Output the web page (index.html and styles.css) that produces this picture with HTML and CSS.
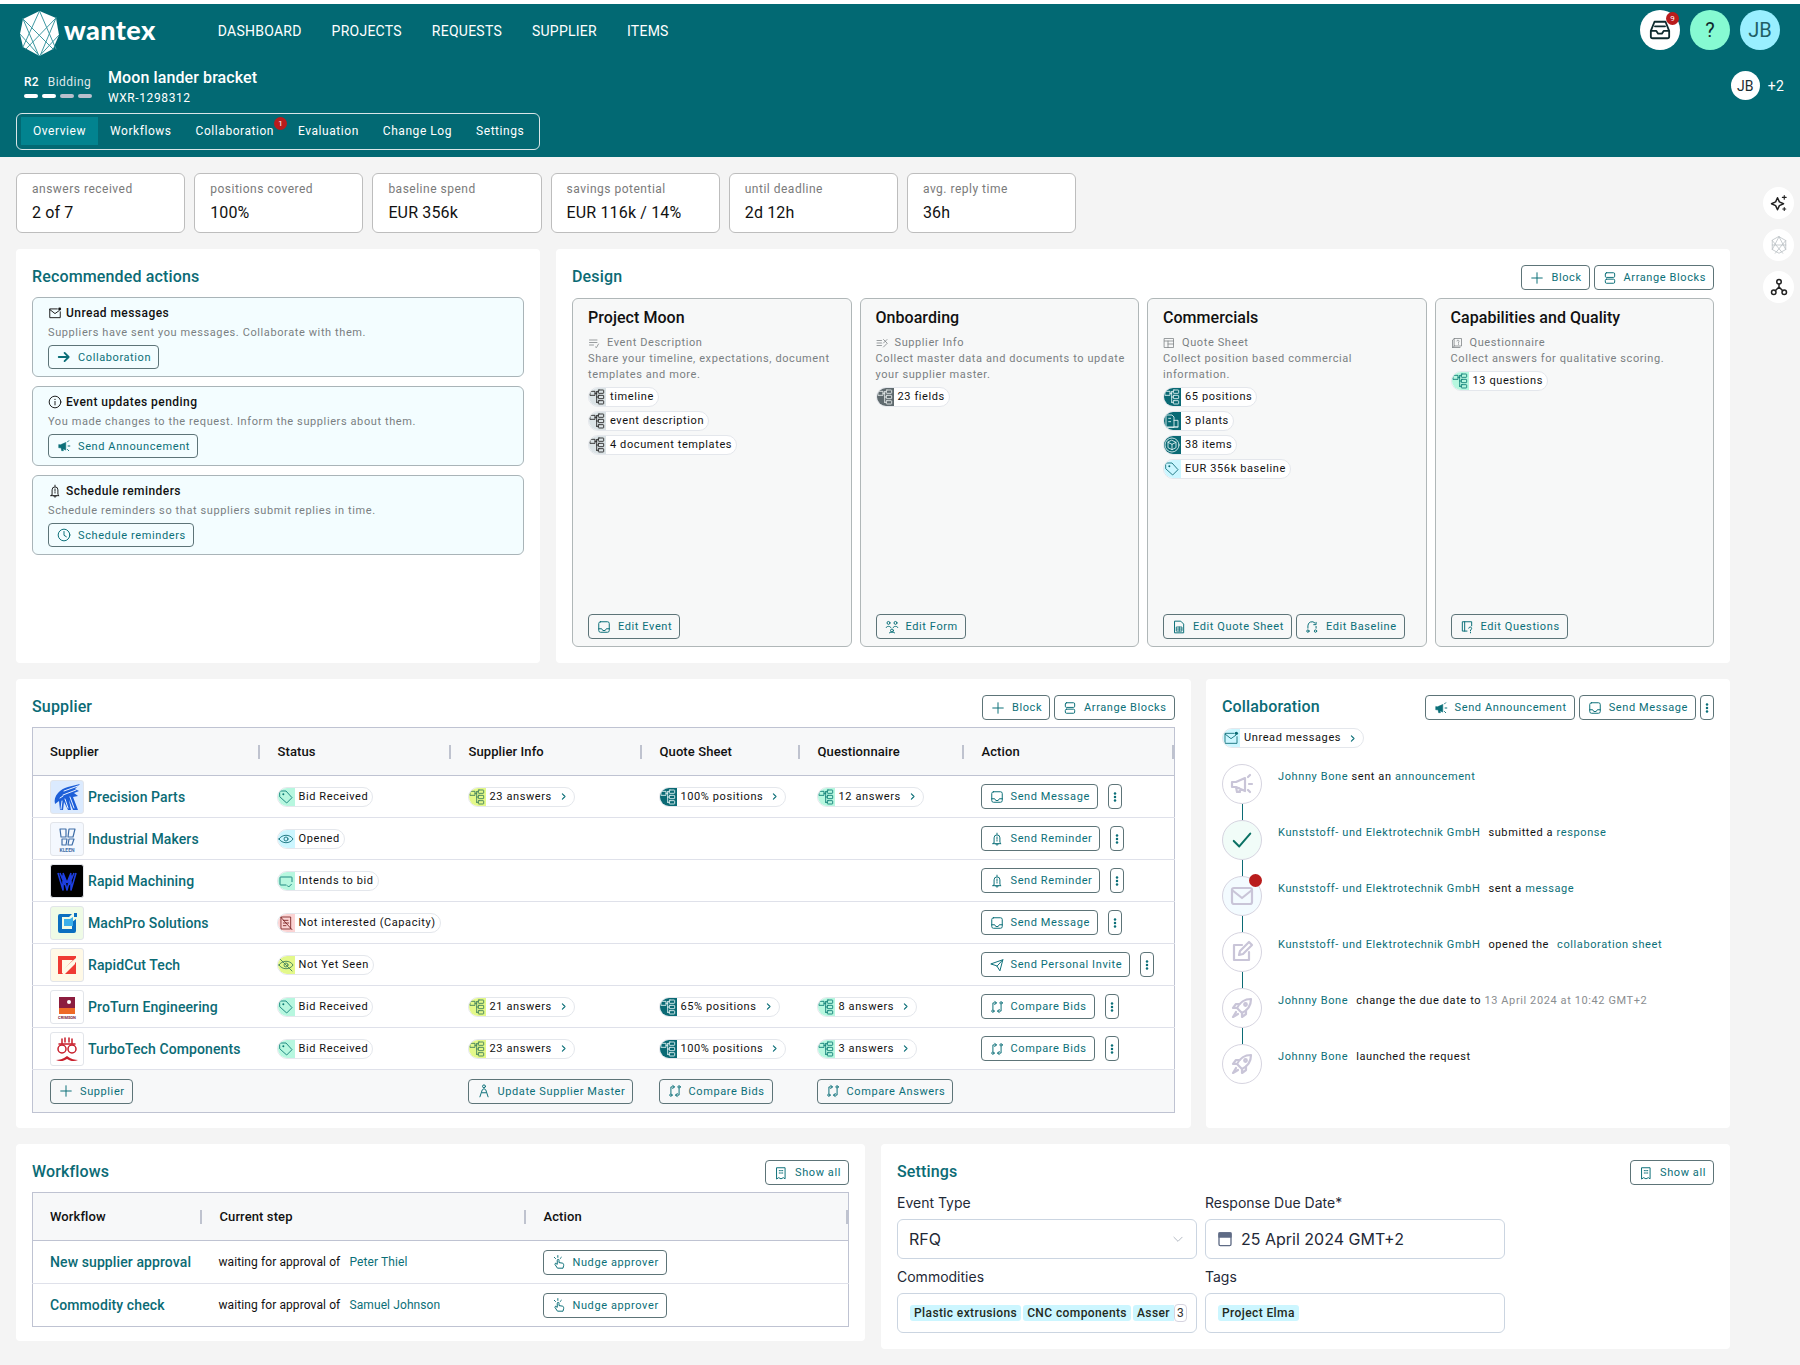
FILE: index.html
```html
<!DOCTYPE html>
<html lang="en">
<head>
<meta charset="utf-8">
<title>Moon lander bracket</title>
<link rel="stylesheet" href="styles.css">
</head>
<body>
<svg class="sprite" xmlns="http://www.w3.org/2000/svg">
<symbol id="tree" viewBox="0 0 24 24"><rect x="2" y="3.500" width="7" height="6"/><rect x="14" y="1.500" width="8" height="5" rx=".8"/><rect x="14" y="9.500" width="8" height="5" rx=".8"/><rect x="14" y="17.500" width="8" height="5" rx=".8"/><path d="M9 6.500h2.500M11.500 4V20M11.500 4H14M11.500 12H14M11.500 20H14"/></symbol>
<symbol id="maildot" viewBox="0 0 24 24"><path d="M16 5H3v15h18V10"/><path d="M3 6l9 7 7-5"/><circle cx="20" cy="5" r="2.500" fill="currentColor" stroke="none"/></symbol>
<symbol id="info" viewBox="0 0 24 24"><circle cx="12" cy="12" r="10"/><path d="M12 11v6"/><circle cx="12" cy="7.500" r="1" fill="currentColor" stroke="none"/></symbol>
<symbol id="bell" viewBox="0 0 24 24"><path d="M12 2v2M7 18V10a5 5 0 0 1 10 0v8l2 2H5zM10 20.500a2 2 0 0 0 4 0"/><path d="M12 8.500v4M12 14.500v1"/></symbol>
<symbol id="arrow" viewBox="0 0 24 24"><path d="M3 12h17M13 5l7 7-7 7" stroke-width="3.200"/></symbol>
<symbol id="mega" viewBox="0 0 24 24"><path d="M3 10v5h3l9 4V6L6 10zM7 15l1 5h3l-1-4" fill="currentColor" stroke-width="1"/><path d="M18 5l2-2M19 12h3M18 18l2 2"/></symbol>
<symbol id="megaline" viewBox="0 0 24 24"><path d="M2 10v5h4l9 4V6L6 10zM6 15l1 5h3l-1-4"/><path d="M18 5l2-2M19 12h3M18 18l2 2"/></symbol>
<symbol id="clock" viewBox="0 0 24 24"><circle cx="12" cy="12" r="10"/><path d="M12 6v6.500l4 2.500"/></symbol>
<symbol id="plus" viewBox="0 0 24 24"><path d="M12 3v18M3 12h18"/></symbol>
<symbol id="rows" viewBox="0 0 24 24"><rect x="4" y="3" width="16" height="8" rx="2"/><rect x="4" y="14" width="16" height="7" rx="2"/></symbol>
<symbol id="tray" viewBox="0 0 24 24"><rect x="3" y="3" width="18" height="18" rx="3"/><path d="M3 15h5l2 3h4l2-3h5"/></symbol>
<symbol id="people" viewBox="0 0 24 24"><circle cx="6" cy="5" r="2.500"/><circle cx="18" cy="5" r="2.500"/><circle cx="12" cy="18" r="2.500"/><path d="M2 13c0-3 8-3 8 0M14 13c0-3 8-3 8 0M7 22c0-2 10-2 10 0"/></symbol>
<symbol id="docgrid" viewBox="0 0 24 24"><path d="M5 2h10l5 5v15H5z"/><path d="M8 12h9v7H8zM12.500 12v7M8 15.500h9" stroke-width="1.500"/></symbol>
<symbol id="headset" viewBox="0 0 24 24"><path d="M5 14V10a7 7 0 0 1 12-5M19 4v4h-4"/><circle cx="5" cy="19" r="2"/><circle cx="18" cy="19" r="2"/><path d="M19 11v3"/></symbol>
<symbol id="docq" viewBox="0 0 24 24"><path d="M20 10V3H4v16h8"/><path d="M8 3v16"/><path d="M15 14a2.500 2.500 0 1 1 3 3v1.500M18 21v1"/></symbol>
<symbol id="listcheck" viewBox="0 0 24 24"><path d="M3 6h15M3 11h15M3 16h8M15 20l2 1 4-7"/></symbol>
<symbol id="listx" viewBox="0 0 24 24"><path d="M2 7h9M2 12h9M2 17h9M15 5l7 7M22 5l-7 7M15 20l7-7"/></symbol>
<symbol id="table" viewBox="0 0 24 24"><rect x="3" y="3" width="18" height="18"/><path d="M3 8h18M10 8v13M10 14h11"/></symbol>
<symbol id="bookq" viewBox="0 0 24 24"><path d="M7 3h14v15H7zM7 3L3 6v15h15M7 18l-4 3"/><path d="M12 8a2 2 0 1 1 3 2v2M15 14v1" stroke-width="1.300"/></symbol>
<symbol id="build" viewBox="0 0 24 24"><path d="M3 21V3h9l3 3v15zM15 11h6v10h-6M3 21h18"/><path d="M7 8h3M7 13h3"/></symbol>
<symbol id="cube" viewBox="0 0 24 24"><circle cx="12" cy="12" r="10.500"/><path d="M12 5l6 3v8l-6 3-6-3V8zM6 8l6 3 6-3M12 11v8"/></symbol>
<symbol id="tag" viewBox="0 0 24 24"><path d="M3 3h9l9 10-8 8L3 12z"/><circle cx="8" cy="8" r="1.500" fill="currentColor" stroke="none"/></symbol>
<symbol id="eye" viewBox="0 0 24 24"><path d="M1.500 12C6 4.500 18 4.500 22.500 12 18 19.500 6 19.500 1.500 12z"/><circle cx="12" cy="12" r="3"/></symbol>
<symbol id="chatcheck" viewBox="0 0 24 24"><path d="M12 18H4a1 1 0 0 1-1-1V7a1 1 0 0 1 1-1h16a1 1 0 0 1 1 1v6"/><path d="M14 19l2 2 4-4"/></symbol>
<symbol id="nodoc" viewBox="0 0 24 24"><path d="M5 3h14v18H5z"/><path d="M8 8h7M8 12h8M8 16h4M3 2l18 20"/></symbol>
<symbol id="eyeoff" viewBox="0 0 24 24"><path d="M1.500 12C6 4.500 18 4.500 22.500 12 18 19.500 6 19.500 1.500 12z"/><circle cx="12" cy="12" r="3"/><path d="M3 3l18 18"/></symbol>
<symbol id="send" viewBox="0 0 24 24"><path d="M2 10L22 3l-5 19-5-8zM12 14l10-11"/></symbol>
<symbol id="compare" viewBox="0 0 24 24"><path d="M8 2l3 3-3 3M11 5H5v11M16 22l-3-3 3-3M13 19h6V8"/><circle cx="5" cy="19" r="2"/><circle cx="19" cy="5" r="2"/></symbol>
<symbol id="person" viewBox="0 0 24 24"><circle cx="12" cy="4" r="2.500"/><path d="M5 22l4-12 3-2 3 2 4 12M9 15h6"/></symbol>
<symbol id="chev" viewBox="0 0 24 24"><path d="M9 5l7 7-7 7" stroke-width="3"/></symbol>
<symbol id="rocket" viewBox="0 0 24 24"><path d="M21 3c-7 0-11 3-14 9l5 5c6-3 9-7 9-14zM7 12H3l3-4h4M12 17v4l4-3v-4M6 16l-3 5 5-3"/><circle cx="15.500" cy="8.500" r="1.300"/></symbol>
<symbol id="edit" viewBox="0 0 24 24"><path d="M12 5H4v15h15v-8"/><path d="M9 15l1-4L19 2l3 3-9 9z"/></symbol>
<symbol id="check" viewBox="0 0 24 24"><path d="M3 13l6 6L21 5"/></symbol>
<symbol id="mail" viewBox="0 0 24 24"><rect x="2" y="4" width="20" height="16" rx="2"/><path d="M2 6l10 8 10-8"/></symbol>
<symbol id="hand" viewBox="0 0 24 24"><path d="M9 22l-4-6 1-2 3 2V9a1.500 1.500 0 0 1 3 0v4l6 1c2 .5 2 2 2 4l-1 4z"/><path d="M4 4l2 2M10 1v3M16 4l-2 2"/></symbol>
<symbol id="receipt" viewBox="0 0 24 24"><path d="M5 3h14v19l-3-2-4 2-4-2-3 2z"/><path d="M9 8h2M13 8h2M9 12h2M13 12h2"/></symbol>
<symbol id="calendar" viewBox="0 0 24 24"><rect x="3" y="3" width="18" height="19" rx="2"/><rect x="3" y="3" width="18" height="6" fill="currentColor"/></symbol>
<symbol id="down" viewBox="0 0 24 24"><path d="M5 9l7 7 7-7"/></symbol>
<symbol id="sparkle" viewBox="0 0 24 24"><path d="M10 5l2.500 5.500L18 13l-5.500 2.500L10 21l-2.500-5.500L2 13l5.500-2.500z"/><path d="M19 2v5M16.500 4.500h5M19 18v4M17 20h4" stroke-width="1.500"/></symbol>
<symbol id="hexa" viewBox="0 0 24 24"><path d="M12 1l9 5v12l-9 5-9-5V6zM3 6l14 17M21 6L7 23M12 1L3 18M12 1l9 17M3 12h18"/></symbol>
<symbol id="nodes" viewBox="0 0 24 24"><circle cx="12" cy="5" r="3"/><circle cx="5" cy="19" r="3"/><circle cx="19" cy="19" r="3"/><path d="M12 8v4M12 12l-5 5M12 12l5 5"/></symbol>
<symbol id="inbox" viewBox="0 0 24 24"><path d="M6 3h12l4 10v6a2 2 0 0 1-2 2H4a2 2 0 0 1-2-2v-6zM2 13h6l2 3h4l2-3h6M6.500 8h11"/></symbol>
<symbol id="dots" viewBox="0 0 24 24"><circle cx="12" cy="5" r="2.500" fill="currentColor" stroke="none"/><circle cx="12" cy="12" r="2.500" fill="currentColor" stroke="none"/><circle cx="12" cy="19" r="2.500" fill="currentColor" stroke="none"/></symbol>
</svg>

<div class="topstrip"></div>
<header class="header">
  <div class="topbar">
    <a class="logo">
      <svg class="logo-mark" viewBox="0 0 39 45"><path class="logo-hex" d="M19.500 0L36 7l3 17-6 14-13.500 7L3 36 0 23 3 8z"/><path class="logo-web" d="M19.500 0L36 38M19.500 0L3 36M3 8l30 30M36 7L6 38M0 23l19.500 22M39 24L19.500 45M3 8l16 37M36 7L20 45"/></svg>
      <span class="logo-text">wantex</span>
    </a>
    <nav class="nav"><a>DASHBOARD</a><a>PROJECTS</a><a>REQUESTS</a><a>SUPPLIER</a><a>ITEMS</a></nav>
    <div class="top-actions">
      <span class="round round-white"><svg class="ic-22"><use href="#inbox"/></svg><span class="badge">9</span></span>
      <span class="round round-mint">?</span>
      <span class="round round-cyan">JB</span>
    </div>
  </div>
  <div class="titlebar">
    <div class="phase">
      <div class="phase-text"><b>R2</b><span>Bidding</span></div>
      <div class="phase-steps"><i class="on"></i><i class="on"></i><i></i><i></i></div>
    </div>
    <div class="title-text">
      <div class="title">Moon lander bracket</div>
      <div class="code">WXR-1298312</div>
    </div>
    <div class="team"><span class="mini-avatar">JB</span><span>+2</span></div>
  </div>
  <nav class="tabs">
    <a class="tab active">Overview</a><a class="tab">Workflows</a><a class="tab">Collaboration<span class="badge tab-badge">1</span></a><a class="tab">Evaluation</a><a class="tab">Change Log</a><a class="tab">Settings</a>
  </nav>
</header>

<aside class="rail">
  <span class="rail-btn"><svg class="ic-18 dark"><use href="#sparkle"/></svg></span>
  <span class="rail-btn"><svg class="ic-18 pale"><use href="#hexa"/></svg></span>
  <span class="rail-btn"><svg class="ic-18 dark"><use href="#nodes"/></svg></span>
</aside>

<main class="main">
  <section class="stats">
    <div class="stat"><div class="stat-label">answers received</div><div class="stat-value">2 of 7</div></div>
    <div class="stat"><div class="stat-label">positions covered</div><div class="stat-value">100%</div></div>
    <div class="stat"><div class="stat-label">baseline spend</div><div class="stat-value">EUR 356k</div></div>
    <div class="stat"><div class="stat-label">savings potential</div><div class="stat-value">EUR 116k / 14%</div></div>
    <div class="stat"><div class="stat-label">until deadline</div><div class="stat-value">2d 12h</div></div>
    <div class="stat"><div class="stat-label">avg. reply time</div><div class="stat-value">36h</div></div>
  </section>

  <div class="row row-one">
    <section class="panel">
      <div class="panel-head"><h2>Recommended actions</h2></div>
      <div class="recs">
        <div class="rec">
          <div class="rec-title"><svg class="ic-14"><use href="#maildot"/></svg>Unread messages</div>
          <p class="muted">Suppliers have sent you messages. Collaborate with them.</p>
          <a class="btn"><svg class="ic-14"><use href="#arrow"/></svg>Collaboration</a>
        </div>
        <div class="rec">
          <div class="rec-title"><svg class="ic-14"><use href="#info"/></svg>Event updates pending</div>
          <p class="muted">You made changes to the request. Inform the suppliers about them.</p>
          <a class="btn"><svg class="ic-14"><use href="#mega"/></svg>Send Announcement</a>
        </div>
        <div class="rec">
          <div class="rec-title"><svg class="ic-14"><use href="#bell"/></svg>Schedule reminders</div>
          <p class="muted">Schedule reminders so that suppliers submit replies in time.</p>
          <a class="btn"><svg class="ic-14"><use href="#clock"/></svg>Schedule reminders</a>
        </div>
      </div>
    </section>

    <section class="panel">
      <div class="panel-head"><h2>Design</h2><div class="btns">
        <a class="btn"><svg class="ic-14"><use href="#plus"/></svg>Block</a>
        <a class="btn"><svg class="ic-14"><use href="#rows"/></svg>Arrange Blocks</a>
      </div></div>
      <div class="design-grid">
        <article class="block">
          <h3>Project Moon</h3>
          <div class="block-kind"><svg class="ic-12"><use href="#listcheck"/></svg>Event Description</div>
          <p class="muted">Share your timeline, expectations, document templates and more.</p>
          <div class="chips">
            <span class="chip"><span class="chip-ic c-slate"><svg class="ic-16"><use href="#tree"/></svg></span>timeline</span>
            <span class="chip"><span class="chip-ic c-slate"><svg class="ic-16"><use href="#tree"/></svg></span>event description</span>
            <span class="chip"><span class="chip-ic c-slate"><svg class="ic-16"><use href="#tree"/></svg></span>4 document templates</span>
          </div>
          <div class="block-foot"><a class="btn"><svg class="ic-14"><use href="#tray"/></svg>Edit Event</a></div>
        </article>
        <article class="block">
          <h3>Onboarding</h3>
          <div class="block-kind"><svg class="ic-12"><use href="#listx"/></svg>Supplier Info</div>
          <p class="muted">Collect master data and documents to update your supplier master.</p>
          <div class="chips">
            <span class="chip"><span class="chip-ic c-grey"><svg class="ic-16"><use href="#tree"/></svg></span>23 fields</span>
          </div>
          <div class="block-foot"><a class="btn"><svg class="ic-14"><use href="#people"/></svg>Edit Form</a></div>
        </article>
        <article class="block">
          <h3>Commercials</h3>
          <div class="block-kind"><svg class="ic-12"><use href="#table"/></svg>Quote Sheet</div>
          <p class="muted">Collect position based commercial information.</p>
          <div class="chips">
            <span class="chip"><span class="chip-ic c-teal"><svg class="ic-16"><use href="#tree"/></svg></span>65 positions</span>
            <span class="chip"><span class="chip-ic c-teal"><svg class="ic-16"><use href="#build"/></svg></span>3 plants</span>
            <span class="chip"><span class="chip-ic c-teal"><svg class="ic-16"><use href="#cube"/></svg></span>38 items</span>
            <span class="chip"><span class="chip-ic c-cyan"><svg class="ic-16"><use href="#tag"/></svg></span>EUR 356k baseline</span>
          </div>
          <div class="block-foot"><a class="btn"><svg class="ic-14"><use href="#docgrid"/></svg>Edit Quote Sheet</a><a class="btn"><svg class="ic-14"><use href="#headset"/></svg>Edit Baseline</a></div>
        </article>
        <article class="block">
          <h3>Capabilities and Quality</h3>
          <div class="block-kind"><svg class="ic-12"><use href="#bookq"/></svg>Questionnaire</div>
          <p class="muted">Collect answers for qualitative scoring.</p>
          <div class="chips">
            <span class="chip"><span class="chip-ic c-mint"><svg class="ic-16"><use href="#tree"/></svg></span>13 questions</span>
          </div>
          <div class="block-foot"><a class="btn"><svg class="ic-14"><use href="#docq"/></svg>Edit Questions</a></div>
        </article>
      </div>
    </section>
  </div>

  <div class="row row-two">
    <section class="panel">
      <div class="panel-head"><h2>Supplier</h2><div class="btns">
        <a class="btn"><svg class="ic-14"><use href="#plus"/></svg>Block</a>
        <a class="btn"><svg class="ic-14"><use href="#rows"/></svg>Arrange Blocks</a>
      </div></div>
      <table class="grid supplier-grid">
        <colgroup><col class="s1"><col class="s2"><col class="s2"><col class="s3"><col class="s4"><col></colgroup>
        <thead><tr><th>Supplier</th><th>Status</th><th>Supplier Info</th><th>Quote Sheet</th><th>Questionnaire</th><th>Action</th></tr></thead>
        <tbody>
          <tr>
            <td><div class="who"><span class="logo-box lb-blue"><svg viewBox="0 0 32 32"><path class="f-blue" d="M29 3C21 5 12 6 7 12 4 15 3 19 4 23l4-3 1 9h3l1-8 4 8h3l-2-10 4 10h5l-5-13 5-1-4-3 5-2-4-2z"/><path class="s-white" d="M27 5L13 10M25 9L12 14M9 17l3-2M14 18l3 9M19 16l4 11M11 20l-1 8"/></svg></span><a class="name">Precision Parts</a></div></td>
            <td><span class="chip"><span class="chip-ic c-mint"><svg class="ic-16"><use href="#tag"/></svg></span>Bid Received</span></td>
            <td><span class="chip"><span class="chip-ic c-lime"><svg class="ic-16"><use href="#tree"/></svg></span>23 answers<svg class="ic-chev"><use href="#chev"/></svg></span></td>
            <td><span class="chip"><span class="chip-ic c-teal"><svg class="ic-16"><use href="#tree"/></svg></span>100% positions<svg class="ic-chev"><use href="#chev"/></svg></span></td>
            <td><span class="chip"><span class="chip-ic c-mint"><svg class="ic-16"><use href="#tree"/></svg></span>12 answers<svg class="ic-chev"><use href="#chev"/></svg></span></td>
            <td><div class="acts"><a class="btn"><svg class="ic-14"><use href="#tray"/></svg>Send Message</a><a class="btn-more"><svg class="ic-12"><use href="#dots"/></svg></a></div></td>
          </tr>
          <tr>
            <td><div class="who"><span class="logo-box lb-ice"><svg viewBox="0 0 32 32"><path class="s-navy" d="M9 6h6v8h-5zM18 6h6l-2 8h-5zM11 16h5l-1 6h-4zM18 16h5l-2 6h-4z"/><text class="lb-word" x="16" y="29">KLEEN</text></svg></span><a class="name">Industrial Makers</a></div></td>
            <td><span class="chip"><span class="chip-ic c-cyan"><svg class="ic-16"><use href="#eye"/></svg></span>Opened</span></td>
            <td></td><td></td><td></td>
            <td><div class="acts"><a class="btn"><svg class="ic-14"><use href="#bell"/></svg>Send Reminder</a><a class="btn-more"><svg class="ic-12"><use href="#dots"/></svg></a></div></td>
          </tr>
          <tr>
            <td><div class="who"><span class="logo-box lb-black"><svg viewBox="0 0 32 32"><path class="s-royal" d="M7 8l5 17V10l4 15 4-15v15l5-17M9 8l5 12M12 8l4 10M20 8l-4 10M23 8l-5 12"/></svg></span><a class="name">Rapid Machining</a></div></td>
            <td><span class="chip"><span class="chip-ic c-mint"><svg class="ic-16"><use href="#chatcheck"/></svg></span>Intends to bid</span></td>
            <td></td><td></td><td></td>
            <td><div class="acts"><a class="btn"><svg class="ic-14"><use href="#bell"/></svg>Send Reminder</a><a class="btn-more"><svg class="ic-12"><use href="#dots"/></svg></a></div></td>
          </tr>
          <tr>
            <td><div class="who"><span class="logo-box lb-green"><svg viewBox="0 0 32 32"><path class="f-azure" d="M9 7h12l-3 3h-7v12h10v-7l4-3v12a2 2 0 0 1-2 2H9a2 2 0 0 1-2-2V9a2 2 0 0 1 2-2z"/><path class="f-sky" d="M13 12h6l3-2v9H13z"/><path class="f-azure" d="M23 6h3v4h-3z"/></svg></span><a class="name">MachPro Solutions</a></div></td>
            <td><span class="chip"><span class="chip-ic c-red"><svg class="ic-16"><use href="#nodoc"/></svg></span>Not interested (Capacity)</span></td>
            <td></td><td></td><td></td>
            <td><div class="acts"><a class="btn"><svg class="ic-14"><use href="#tray"/></svg>Send Message</a><a class="btn-more"><svg class="ic-12"><use href="#dots"/></svg></a></div></td>
          </tr>
          <tr>
            <td><div class="who"><span class="logo-box lb-cream"><svg viewBox="0 0 32 32"><path class="f-red" d="M7 7h18v2L11 21v-10h0 0v13h3l11-11v12H7z"/><path class="f-cream" d="M11 11h11L11 22z"/><path class="f-cream" d="M24 13v2L13 26h-3z"/></svg></span><a class="name">RapidCut Tech</a></div></td>
            <td><span class="chip"><span class="chip-ic c-lime"><svg class="ic-16"><use href="#eyeoff"/></svg></span>Not Yet Seen</span></td>
            <td></td><td></td><td></td>
            <td><div class="acts"><a class="btn"><svg class="ic-14"><use href="#send"/></svg>Send Personal Invite</a><a class="btn-more"><svg class="ic-12"><use href="#dots"/></svg></a></div></td>
          </tr>
          <tr>
            <td><div class="who"><span class="logo-box"><svg viewBox="0 0 32 32"><rect class="f-maroon" x="8" y="6" width="16" height="11"/><rect class="f-orange" x="8" y="17" width="16" height="6"/><circle class="f-white" cx="18" cy="11" r="2"/><text class="lb-word lb-crimson" x="16" y="28">CRIMSON</text></svg></span><a class="name">ProTurn Engineering</a></div></td>
            <td><span class="chip"><span class="chip-ic c-mint"><svg class="ic-16"><use href="#tag"/></svg></span>Bid Received</span></td>
            <td><span class="chip"><span class="chip-ic c-lime"><svg class="ic-16"><use href="#tree"/></svg></span>21 answers<svg class="ic-chev"><use href="#chev"/></svg></span></td>
            <td><span class="chip"><span class="chip-ic c-teal"><svg class="ic-16"><use href="#tree"/></svg></span>65% positions<svg class="ic-chev"><use href="#chev"/></svg></span></td>
            <td><span class="chip"><span class="chip-ic c-mint"><svg class="ic-16"><use href="#tree"/></svg></span>8 answers<svg class="ic-chev"><use href="#chev"/></svg></span></td>
            <td><div class="acts"><a class="btn"><svg class="ic-14"><use href="#compare"/></svg>Compare Bids</a><a class="btn-more"><svg class="ic-12"><use href="#dots"/></svg></a></div></td>
          </tr>
          <tr>
            <td><div class="who"><span class="logo-box"><svg viewBox="0 0 32 32"><circle class="s-crim" cx="11" cy="16" r="4"/><circle class="s-crim" cx="21" cy="16" r="4"/><path class="s-crim" d="M11 6v4M14 5v4M18 5v4M21 6v4M8 11h16"/><path class="f-crim" d="M5 27c3 0 7-1 11-4 4 3 8 4 11 4-4 2-8 1-11-1-3 2-7 3-11 1z"/></svg></span><a class="name">TurboTech Components</a></div></td>
            <td><span class="chip"><span class="chip-ic c-mint"><svg class="ic-16"><use href="#tag"/></svg></span>Bid Received</span></td>
            <td><span class="chip"><span class="chip-ic c-lime"><svg class="ic-16"><use href="#tree"/></svg></span>23 answers<svg class="ic-chev"><use href="#chev"/></svg></span></td>
            <td><span class="chip"><span class="chip-ic c-teal"><svg class="ic-16"><use href="#tree"/></svg></span>100% positions<svg class="ic-chev"><use href="#chev"/></svg></span></td>
            <td><span class="chip"><span class="chip-ic c-mint"><svg class="ic-16"><use href="#tree"/></svg></span>3 answers<svg class="ic-chev"><use href="#chev"/></svg></span></td>
            <td><div class="acts"><a class="btn"><svg class="ic-14"><use href="#compare"/></svg>Compare Bids</a><a class="btn-more"><svg class="ic-12"><use href="#dots"/></svg></a></div></td>
          </tr>
        </tbody>
        <tfoot><tr>
          <td><a class="btn"><svg class="ic-14"><use href="#plus"/></svg>Supplier</a></td>
          <td></td>
          <td><a class="btn"><svg class="ic-14"><use href="#person"/></svg>Update Supplier Master</a></td>
          <td><a class="btn"><svg class="ic-14"><use href="#compare"/></svg>Compare Bids</a></td>
          <td colspan="2"><a class="btn"><svg class="ic-14"><use href="#compare"/></svg>Compare Answers</a></td>
        </tr></tfoot>
      </table>
    </section>

    <section class="panel">
      <div class="panel-head"><h2>Collaboration</h2><div class="btns">
        <a class="btn"><svg class="ic-14"><use href="#mega"/></svg>Send Announcement</a>
        <a class="btn"><svg class="ic-14"><use href="#tray"/></svg>Send Message</a>
        <a class="btn-more"><svg class="ic-12"><use href="#dots"/></svg></a>
      </div></div>
      <span class="chip unread"><span class="chip-ic c-cyan"><svg class="ic-16"><use href="#maildot"/></svg></span>Unread messages<svg class="ic-chev"><use href="#chev"/></svg></span>
      <ol class="feed">
        <li><span class="dot"><svg class="ic-24"><use href="#megaline"/></svg></span><p><a>Johnny Bone</a> sent an <a>announcement</a></p></li>
        <li><span class="dot dot-ok"><svg class="ic-22"><use href="#check"/></svg></span><p><a>Kunststoff- und Elektrotechnik GmbH</a><span class="sp">submitted a</span> <a>response</a></p></li>
        <li><span class="dot dot-new"><svg class="ic-24"><use href="#mail"/></svg><span class="dot-badge"></span></span><p><a>Kunststoff- und Elektrotechnik GmbH</a><span class="sp">sent a</span> <a>message</a></p></li>
        <li><span class="dot"><svg class="ic-24"><use href="#edit"/></svg></span><p><a>Kunststoff- und Elektrotechnik GmbH</a><span class="sp">opened the</span><a class="sp">collaboration sheet</a></p></li>
        <li><span class="dot"><svg class="ic-24"><use href="#rocket"/></svg></span><p><a>Johnny Bone</a><span class="sp">change the due date to</span> <span class="when">13 April 2024 at 10:42 GMT+2</span></p></li>
        <li><span class="dot"><svg class="ic-24"><use href="#rocket"/></svg></span><p><a>Johnny Bone</a><span class="sp">launched the request</span></p></li>
      </ol>
    </section>
  </div>

  <div class="row row-three">
    <section class="panel panel-wf">
      <div class="panel-head"><h2>Workflows</h2><div class="btns"><a class="btn"><svg class="ic-14"><use href="#receipt"/></svg>Show all</a></div></div>
      <table class="grid wf-grid">
        <colgroup><col class="w1"><col class="w2"><col></colgroup>
        <thead><tr><th>Workflow</th><th>Current step</th><th>Action</th></tr></thead>
        <tbody>
          <tr><td><a class="name">New supplier approval</a></td><td class="step">waiting for approval of <a>Peter Thiel</a></td><td><a class="btn"><svg class="ic-14"><use href="#hand"/></svg>Nudge approver</a></td></tr>
          <tr><td><a class="name">Commodity check</a></td><td class="step">waiting for approval of <a>Samuel Johnson</a></td><td><a class="btn"><svg class="ic-14"><use href="#hand"/></svg>Nudge approver</a></td></tr>
        </tbody>
      </table>
    </section>
    <section class="panel panel-set">
      <div class="panel-head"><h2>Settings</h2><div class="btns"><a class="btn"><svg class="ic-14"><use href="#receipt"/></svg>Show all</a></div></div>
      <div class="form">
        <div class="field"><label>Event Type</label><div class="input"><span>RFQ</span><svg class="ic-14 caret"><use href="#down"/></svg></div></div>
        <div class="field"><label>Response Due Date*</label><div class="input input-date"><svg class="ic-16"><use href="#calendar"/></svg><span>25 April 2024 GMT+2</span></div></div>
        <div class="field"><label>Commodities</label><div class="input input-tags"><span class="tag">Plastic extrusions</span><span class="tag">CNC components</span><span class="tag tag-cut">Asser</span><span class="tag-more">3</span></div></div>
        <div class="field"><label>Tags</label><div class="input input-tags"><span class="tag">Project Elma</span></div></div>
      </div>
    </section>
  </div>
</main>
</body>
</html>
```
FILE: styles.css
```css
* { box-sizing: border-box; }
html, body { margin: 0; padding: 0; }
body {
  position: relative;
  width: 1800px;
  min-height: 1365px;
  background: #f4f4f4;
  font-family: Roboto, "Liberation Sans", sans-serif;
  font-size: 11px;
  color: #111;
  letter-spacing: .6px;
}
h2, h3, p, ol { margin: 0; padding: 0; }
a { color: inherit; text-decoration: none; }
.sprite { display: none; }
svg { fill: none; stroke: currentColor; stroke-width: 2; stroke-linecap: round; stroke-linejoin: round; flex: none; }
.ic-12 { width: 12px; height: 12px; }
.ic-14 { width: 14px; height: 14px; }
.ic-16 { width: 16px; height: 16px; }
.ic-18 { width: 18px; height: 18px; }
.ic-22 { width: 22px; height: 22px; }
.ic-24 { width: 24px; height: 24px; }

.topstrip { height: 4px; background: #fff; }
.header { height: 153px; background: #026973; color: #fff; padding: 0 16px; }
.topbar { display: flex; align-items: flex-start; height: 59px; }
.logo { display: flex; align-items: center; margin-left: 4px; height: 50px; margin-top: 4px; }
.logo-mark { width: 39px; height: 45px; stroke: none; }
.logo-hex { fill: #fff; }
.logo-web { fill: none; stroke: #3f99a2; stroke-width: 1; }
.logo-text { margin-left: 5px; font-family: Lato, sans-serif; font-weight: 900; font-size: 27px; letter-spacing: .4px; line-height: 1; margin-top: -8px; }
.nav { display: flex; gap: 30px; margin-left: 62px; margin-top: 18px; font-size: 14px; line-height: 18px; letter-spacing: .25px; }
.top-actions { display: flex; gap: 10px; margin-left: auto; margin-right: 4px; margin-top: 6px; }
.round { position: relative; width: 40px; height: 40px; border-radius: 50%; display: flex; align-items: center; justify-content: center; color: #0e2a2e; font-size: 20px; letter-spacing: 0; }
.round-white { background: #fff; }
.round-mint { background: #86fad2; }
.round-cyan { background: #99efff; color: #1f5f66; }
.badge { position: absolute; display: flex; align-items: center; justify-content: center; width: 13px; height: 13px; border-radius: 50%; background: #b91c1c; color: #fff; font-size: 8px; letter-spacing: 0; }
.round-white .badge { top: 2px; right: 1px; }

.titlebar { display: flex; align-items: flex-start; height: 50px; font-size: 12px; }
.phase { width: 92px; padding-left: 8px; padding-top: 11px; }
.phase-text { display: flex; gap: 9px; line-height: 16px; letter-spacing: .45px; }
.phase-text b { font-weight: 500; letter-spacing: .2px; }
.phase-text span { color: #dfe7ea; }
.phase-steps { display: flex; gap: 4px; margin-top: 4px; }
.phase-steps i { width: 14px; height: 3.500px; border-radius: 2px; background: #b9bfcc; }
.phase-steps i.on { background: #fff; }
.title-text { padding-top: 4px; }
.title { font-size: 16px; line-height: 22px; font-weight: 500; letter-spacing: .1px; }
.code { line-height: 16px; margin-top: 1px; letter-spacing: .6px; }
.team { display: flex; align-items: center; gap: 8px; margin-left: auto; margin-right: 0; padding-top: 8px; font-size: 14px; letter-spacing: .2px; }
.mini-avatar { width: 29px; height: 29px; border-radius: 50%; background: #fff; color: #1a2c30; display: flex; align-items: center; justify-content: center; font-size: 14px; letter-spacing: 0; }
.tabs { display: flex; width: 524px; height: 37px; padding: 3px 4px 4px; border: 1px solid #d9e6e8; border-radius: 6px; font-size: 12px; letter-spacing: .55px; }
.tab { position: relative; display: flex; align-items: center; padding: 0 12px; height: 28px; white-space: nowrap; }
.tab.active { background: #02838f; }
.tab-badge { top: 0; right: -1px; }

.rail { position: absolute; top: 187px; left: 1763px; display: flex; flex-direction: column; gap: 10px; }
.rail-btn { width: 31px; height: 32px; border-radius: 50%; background: #fff; display: flex; align-items: center; justify-content: center; }
.dark { color: #222; }
.pale { color: #b5bcc0; stroke-width: 1; }

.main { width: 1730px; padding: 16px 0 0 16px; }
.stats { display: flex; gap: 9px; }
.stat { width: 169.200px; height: 60px; background: #fff; border: 1px solid #bdbdbd; border-radius: 6px; padding: 7px 15px; }
.stat-label { color: #7a7a7a; line-height: 16px; font-size: 12px; letter-spacing: .5px; }
.stat-value { font-size: 16px; line-height: 22px; margin-top: 5px; letter-spacing: .15px; }

.row { display: grid; margin-top: 16px; }
.row-one { grid-template-columns: 524px 1174px; column-gap: 16px; height: 414px; }
.row-two { grid-template-columns: 1174.500px 524px; column-gap: 15.500px; height: 449px; }
.row-two .panel { padding-bottom: 15px; }
.row-three { grid-template-columns: 849px 849px; column-gap: 16px; align-items: start; }
.panel { background: #fff; border-radius: 4px; padding: 16px; }
.panel-head { display: flex; align-items: center; justify-content: space-between; height: 25px; margin-bottom: 8px; }
h2 { font-size: 16px; font-weight: 500; color: #0b6b75; line-height: 25px; letter-spacing: .15px; margin-top: -2px; }
.btns { display: flex; gap: 4px; align-items: stretch; }
.btn { display: inline-flex; align-items: center; gap: 7px; height: 25px; padding: 0 7px 0 8px; border: 1px solid #5d7478; border-radius: 4px; color: #0b6f78; background: transparent; white-space: nowrap; font-size: 11px; }
.btn svg { stroke-width: 1.700; }
.btn-more { display: inline-flex; align-items: center; justify-content: center; width: 14px; height: 25px; border: 1px solid #5d7478; border-radius: 4px; color: #0b6f78; }
.muted { color: #7a7f82; line-height: 16px; }

.recs { display: flex; flex-direction: column; gap: 9px; margin-top: -1px; }
.rec { height: 80px; background: #f3fdff; border: 1px solid #a9b4b8; border-radius: 6px; padding: 6px 15px; }
.rec-title { display: flex; align-items: center; gap: 4px; line-height: 18px; font-weight: 500; font-size: 12px; letter-spacing: .45px; }
.rec-title svg { stroke-width: 1.600; }
.rec .muted { margin-top: 2px; margin-bottom: 3px; line-height: 18px; }
.rec .btn { height: 24px; }

.design-grid { display: grid; grid-template-columns: repeat(4, 279.500px); column-gap: 8px; }
.block { display: flex; flex-direction: column; height: 349px; background: #f7f8f8; border: 1px solid #b0b7b8; border-radius: 6px; padding: 8px 11px 7px 15px; }
h3 { font-size: 16px; font-weight: 500; line-height: 22px; letter-spacing: .05px; }
.block-kind { display: flex; align-items: center; gap: 7px; margin-top: 6px; color: #7a7f82; line-height: 16px; }
.block-kind svg { stroke-width: 1.500; }
.chips { display: flex; flex-direction: column; align-items: flex-start; gap: 4px; margin-top: 4px; }
.chip { display: inline-flex; align-items: center; height: 20px; background: #fff; border: 1px solid #e4e7ec; border-radius: 10px; padding-right: 4px; white-space: nowrap; line-height: 18px; overflow: hidden; }
.chip-ic { display: flex; align-items: center; justify-content: center; width: 18px; height: 20px; margin: -1px 4px -1px -1px; }
.chip-ic svg { stroke-width: 1.300; }
.c-slate { background: #dbe3e6; color: #222; }
.c-grey { background: #5f6a6e; color: #e8ecec; }
.c-teal { background: #0a6a74; color: #e6f4f5; }
.c-cyan { background: #ccf6ff; color: #0b6b75; }
.c-mint { background: #b7f7df; color: #0b7b74; }
.c-lime { background: #e3f88a; color: #3c7d5a; }
.c-red { background: #fbd3d3; color: #7a2020; }
.ic-chev { width: 9px; height: 9px; margin: 0 2px 0 7px; color: #0b6f78; }
.block-foot { display: flex; gap: 4px; margin-top: auto; }

.grid { width: 100%; margin-top: -1px; border-collapse: collapse; table-layout: fixed; border: 1px solid #bfc3d2; }
.grid th { position: relative; height: 48px; background: #f7f8f9; font-size: 13px; font-weight: 500; text-align: left; padding: 0 0 0 18px; letter-spacing: .1px; border-bottom: 1px solid #bfc3d2; }
.grid th::after { content: ""; position: absolute; right: 0; top: 17px; width: 2px; height: 14px; background: #bfc3cf; }
.grid td { height: 42px; padding: 0 0 0 17px; border-bottom: 1px solid #dfe1ea; vertical-align: middle; }
.grid th:first-child { padding-left: 17px; }
.grid td > .chip, .grid td > .btn { display: flex; width: fit-content; }
.grid tfoot td { height: 43px; background: #f7f8f9; border-bottom: 0; }
.s1 { width: 227px; }
.s2 { width: 191px; }
.s3 { width: 158px; }
.s4 { width: 164px; }
.who { display: flex; align-items: center; gap: 4px; }
.name { color: #0b6b75; font-size: 14px; font-weight: 500; letter-spacing: .1px; }
.logo-box { width: 34px; height: 34px; background: #fff; border: 1px solid #e2e5ea; border-radius: 3px; overflow: hidden; flex: none; }
.logo-box svg { display: block; width: 32px; height: 32px; stroke-width: 1; }
.lb-blue { background: #dbeafe; }
.lb-ice { background: #f4f8fe; }
.lb-black { background: #000; }
.lb-green { background: #effbe6; }
.lb-cream { background: #fff9e6; }
.f-blue { fill: #1d5fd8; stroke: none; }
.s-white { stroke: #e8f1ff; stroke-width: 1; }
.s-navy { stroke: #3f6ea8; stroke-width: 1.200; }
.lb-word { fill: #3f6ea8; stroke: none; font-family: Roboto, sans-serif; font-size: 5px; font-weight: 700; text-anchor: middle; letter-spacing: 0; }
.lb-crimson { fill: #7a1f3d; font-size: 4px; }
.s-royal { stroke: #1d3fe0; stroke-width: 1.600; stroke-linecap: butt; }
.f-azure { fill: #0b6fc0; stroke: none; }
.f-sky { fill: #3bb0ea; stroke: none; }
.f-red { fill: #ef3b33; stroke: none; }
.f-cream { fill: #fff9e6; stroke: none; }
.f-maroon { fill: #8c1d3f; stroke: none; }
.f-orange { fill: #ee6a26; stroke: none; }
.f-white { fill: #fff; stroke: none; }
.s-crim { stroke: #c81e2b; stroke-width: 1.500; }
.f-crim { fill: #c81e2b; stroke: none; }
.acts { display: flex; align-items: center; gap: 10px; }

.unread { display: flex; width: fit-content; }
.feed { list-style: none; margin-top: 16px; }
.feed li { position: relative; display: flex; gap: 16px; height: 56px; }
.feed li:not(:last-child)::before { content: ""; position: absolute; left: 20px; top: 40px; width: 1px; height: 16px; background: #0b6b75; }
.feed p { line-height: 16px; padding-top: 5px; white-space: nowrap; }
.feed p a { color: #0b6f78; }
.sp { margin-left: 8px; }
.when { color: #8a8d90; }
.dot { position: relative; width: 40px; height: 40px; border: 1px solid #d6d4e0; border-radius: 50%; display: flex; align-items: center; justify-content: center; color: #c9c5d8; flex: none; background: #fff; }
.dot svg { stroke-width: 2.200; }
.dot-ok { background: #f1fcf8; color: #0b7164; }
.dot-new { background: #f3fbff; }
.dot-badge { position: absolute; top: -3px; right: -1px; width: 13px; height: 13px; border-radius: 50%; background: #b91c1c; }

.panel-wf { height: 197px; }
.panel-set { height: 205px; }
.w1 { width: 169px; }
.w2 { width: 324px; }
.wf-grid td { height: 43px; }
.wf-grid tbody tr:last-child td { border-bottom: 0; }
.step { letter-spacing: .1px; font-size: 12px; }
.step a { color: #0b6f78; margin-left: 6px; }
.form { display: grid; grid-template-columns: 300px 300px; column-gap: 8px; row-gap: 8px; font-family: Inter, sans-serif; letter-spacing: 0; }
.field label { display: block; font-size: 14px; line-height: 20px; color: #1f2937; margin-bottom: 6px; }
.input { display: flex; align-items: center; height: 40px; border: 1px solid #cbd5e1; border-radius: 6px; padding: 0 11px; font-size: 16px; color: #1f2937; background: #fff; overflow: hidden; white-space: nowrap; }
.caret { margin-left: auto; color: #a9b0bb; stroke-width: 1.500; }
.input-date { gap: 8px; }
.input-date svg { color: #5f6b85; stroke-width: 2; }
.input-tags { gap: 2px; padding: 0 12px; font-family: Roboto, sans-serif; font-size: 12px; letter-spacing: .4px; }
.tag { height: 16px; line-height: 16px; padding: 0 4px; background: #ccf6ff; border-radius: 3px; font-weight: 500; color: #1f2a22; }
.tag-cut { border-radius: 3px 0 0 3px; }
.tag-more { height: 18px; line-height: 16px; padding: 0 2px; margin-left: -2px; border: 1px solid #d6d4e0; border-radius: 4px; color: #333; }
```
